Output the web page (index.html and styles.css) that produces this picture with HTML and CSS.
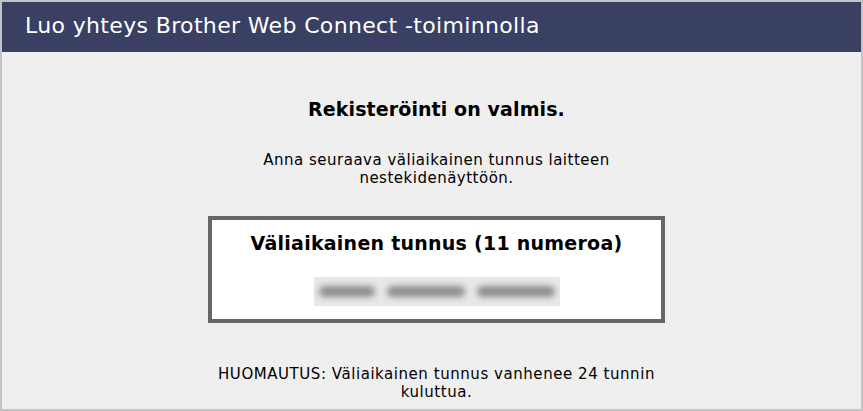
FILE: index.html
```html
<!DOCTYPE html>
<html>
<head>
  <title>Brother Web Connect</title>
  <link rel="stylesheet" href="styles.css">
</head>
<body>
  <div class="frame">
    <div class="header">Luo yhteys Brother Web Connect -toiminnolla</div>
    <div class="content">
      <div class="column">
        <h2 class="title">Rekisteröinti on valmis.</h2>
        <p class="info">Anna seuraava väliaikainen tunnus laitteen nestekidenäyttöön.</p>
        <div class="code-box">
          <h3 class="code-title">Väliaikainen tunnus (11 numeroa)</h3>
          <div class="code-value">
            <span class="blur blur-short"></span>
            <span class="blur"></span>
            <span class="blur"></span>
          </div>
        </div>
        <p class="note">HUOMAUTUS: Väliaikainen tunnus vanhenee 24 tunnin kuluttua.</p>
      </div>
    </div>
  </div>
</body>
</html>
```

FILE: styles.css
```css
html, body {
  margin: 0;
  padding: 0;
}

body {
  font-family: "DejaVu Sans", Verdana, sans-serif;
  background-color: #efefef;
  color: #000;
}

.frame {
  height: 407px;
  border: 2px solid #c3c3c3;
  background-color: #efefef;
  overflow: hidden;
}

.header {
  height: 50px;
  line-height: 48px;
  padding-left: 23px;
  background-color: #394063;
  color: #fff;
  font-size: 22px;
  letter-spacing: 0.35px;
}

.content {
  padding-left: 10px;
}

.column {
  width: 457px;
  margin: 0 auto;
  text-align: center;
}

.title {
  margin: 45px 0 0;
  font-size: 19px;
  line-height: 24px;
  letter-spacing: 0.1px;
}

.info {
  margin: 30px 0 0;
  font-size: 15px;
  line-height: 18px;
  letter-spacing: 0.5px;
}

.code-box {
  margin-top: 29px;
  height: 99px;
  border: 4px solid #666;
  background-color: #fff;
}

.code-title {
  margin: 11px 0 0;
  font-size: 19px;
  line-height: 24px;
  letter-spacing: 0.25px;
}

.code-value {
  display: inline-flex;
  align-items: center;
  gap: 12px;
  margin-top: 22px;
  height: 29px;
  padding: 0 5px;
  background-color: #e8e8e8;
  vertical-align: top;
}

.blur {
  width: 78px;
  height: 11px;
  border-radius: 6px;
  background-color: #8c8c8c;
  filter: blur(3px);
}

.blur-short {
  width: 56px;
}

.note {
  margin: 42px 0 0;
  font-size: 15px;
  line-height: 18px;
  letter-spacing: 0.55px;
}
```
